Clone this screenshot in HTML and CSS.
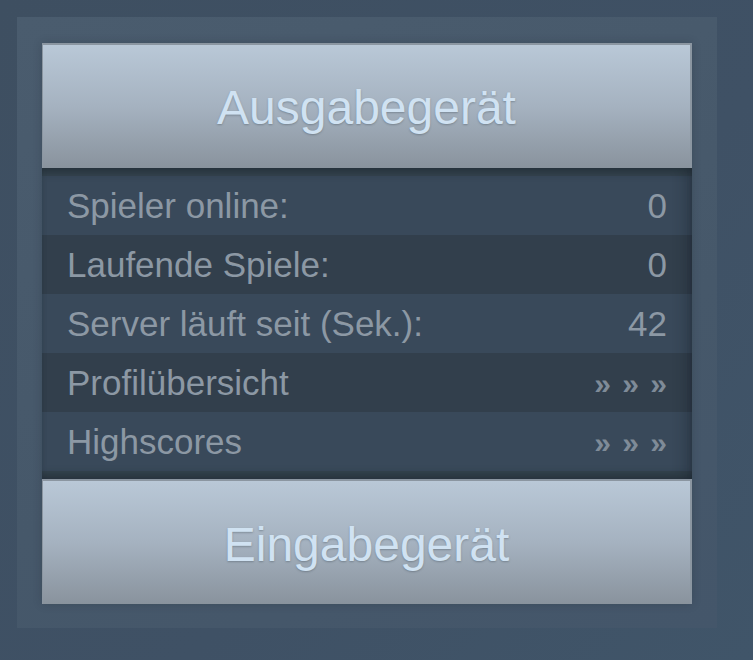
FILE: index.html
```html
<!DOCTYPE html>
<html lang="de">
<head>
<meta charset="utf-8">
<title>Server</title>
<link rel="stylesheet" href="styles.css">
</head>
<body>
<div class="panel">
  <div class="card">
    <div class="device device-top">Ausgabegerät</div>
    <div class="stats">
      <div class="row odd"><span>Spieler online:</span><span>0</span></div>
      <div class="row even"><span>Laufende Spiele:</span><span>0</span></div>
      <div class="row odd"><span>Server läuft seit (Sek.):</span><span>42</span></div>
      <div class="row even"><span>Profilübersicht</span><span class="more">» » »</span></div>
      <div class="row odd"><span>Highscores</span><span class="more">» » »</span></div>
    </div>
    <div class="device device-bottom">Eingabegerät</div>
  </div>
</div>
</body>
</html>
```
FILE: styles.css
```css
html, body {
  margin: 0;
  padding: 0;
}
body {
  width: 753px;
  height: 660px;
  background: linear-gradient(135deg, #3e4f61 0%, #3f5165 60%, #405569 100%);
  font-family: "Liberation Sans", Arial, sans-serif;
  padding: 17px 0 0 17px;
  box-sizing: border-box;
}
.panel {
  width: 700px;
  height: 611px;
  box-sizing: border-box;
  padding: 26px 25px 24px 25px;
  background: linear-gradient(160deg, #4a5c6e 0%, #46586a 60%, #44566a 100%);
}
.card {
  display: flex;
  flex-direction: column;
  width: 650px;
  height: 561px;
  box-shadow: 0 0 8px rgba(30, 40, 52, 0.25);
}
.device {
  height: 125px;
  box-sizing: border-box;
  display: flex;
  align-items: center;
  justify-content: center;
  font-size: 48px;
  color: #d0e2f2;
  text-shadow: 0 1px 2px rgba(50, 62, 75, 0.35);
  background: linear-gradient(180deg, #b9c8d7 0%, #a5b2c0 50%, #89939d 100%);
  border-top: 2px solid #8b96a1;
  border-left: 1px solid #8b96a1;
  border-right: 2px solid #8b96a1;
}
.device-top {
  padding-top: 2px;
}
.device-bottom {
  padding-top: 4px;
}
.stats {
  position: relative;
  height: 311px;
  box-sizing: border-box;
  padding: 8px 0 8px 0;
  background: #35444f;
  display: flex;
  flex-direction: column;
}
.stats::after {
  content: "";
  position: absolute;
  inset: 0;
  pointer-events: none;
  box-shadow: inset 0 9px 9px -5px rgba(20, 28, 36, 0.45),
              inset 0 -9px 9px -5px rgba(20, 28, 36, 0.4),
              inset -14px 0 14px -8px rgba(20, 28, 36, 0.3);
}
.row {
  height: 59px;
  flex: none;
  display: flex;
  align-items: center;
  justify-content: space-between;
  padding: 0 25px;
  font-size: 35px;
  color: #8c98a4;
}
.odd {
  background: #39495a;
}
.even {
  background: #323f4c;
}
.more {
  font-size: 30px;
  font-weight: bold;
  color: #7f8b98;
  word-spacing: 3px;
  padding-top: 3px;
}
```
